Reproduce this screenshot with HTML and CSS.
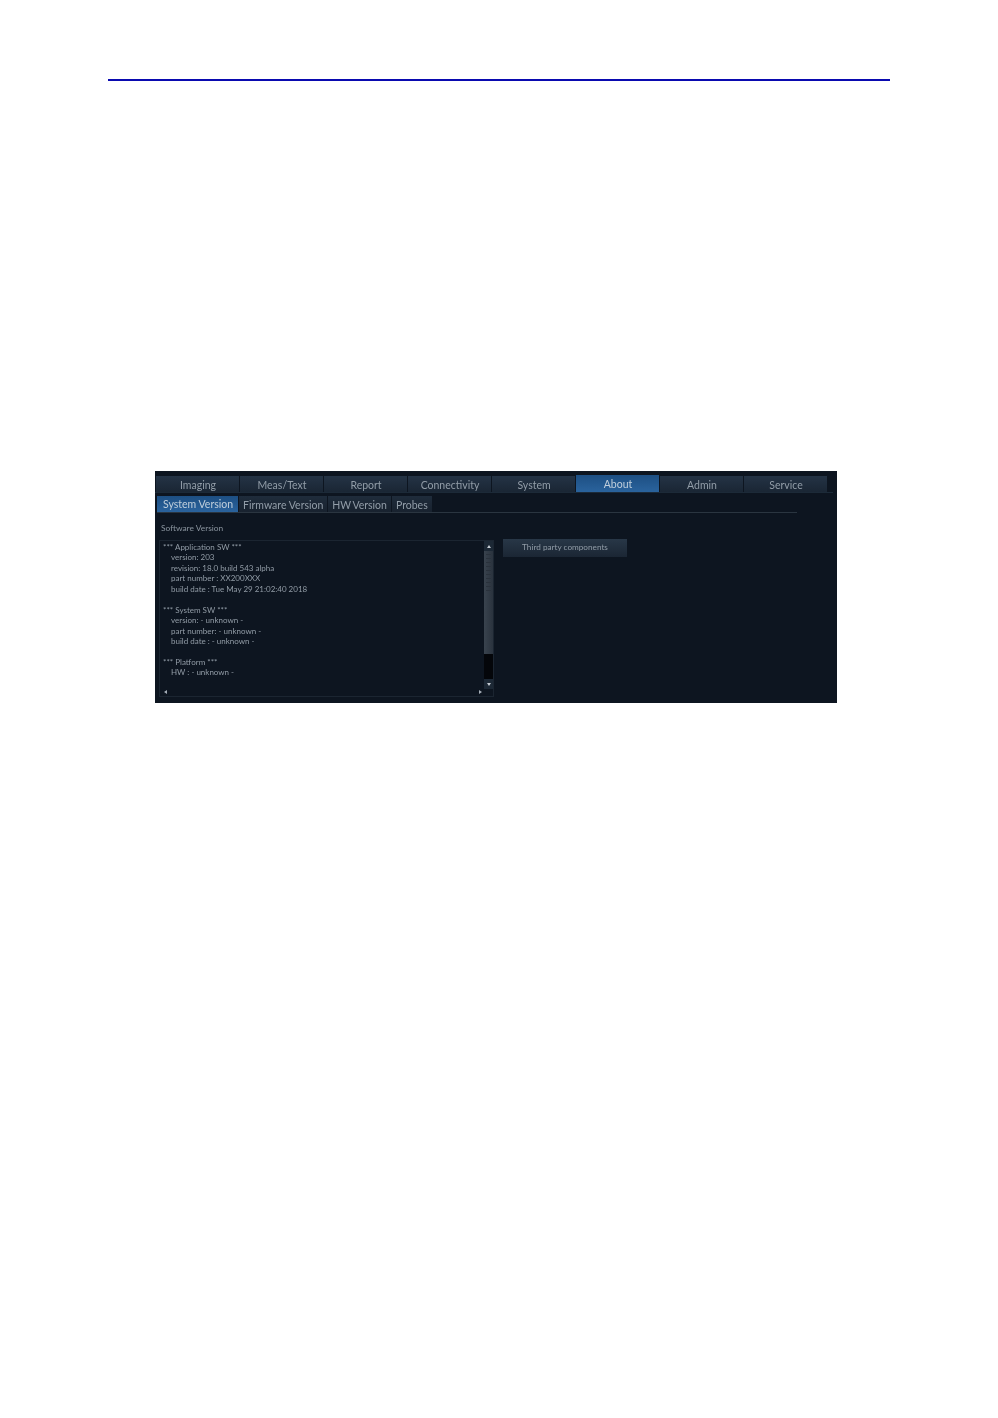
FILE: index.html
```html
<!DOCTYPE html>
<html>
<head>
  <title>About</title>
  <link rel="stylesheet" href="styles.css">
</head>
<body>
  <div class="page-rule"></div>

  <div class="panel">
    <div class="tabs">
      <div class="tab">Imaging</div>
      <div class="tab">Meas/Text</div>
      <div class="tab">Report</div>
      <div class="tab">Connectivity</div>
      <div class="tab">System</div>
      <div class="tab active">About</div>
      <div class="tab">Admin</div>
      <div class="tab">Service</div>
    </div>

    <div class="subtabs">
      <div class="subtab active">System Version</div>
      <div class="subtab">Firmware Version</div>
      <div class="subtab hw">HW Version</div>
      <div class="subtab">Probes</div>
    </div>

    <div class="section-title">Software Version</div>

    <div class="content">
      <div class="textbox">
        <div class="lines">
          <p>*** Application SW ***</p>
          <p class="indent">version: 203</p>
          <p class="indent">revision: 18.0 build 543 alpha</p>
          <p class="indent">part number : XX200XXX</p>
          <p class="indent">build date : Tue May 29 21:02:40 2018</p>
          <p>&nbsp;</p>
          <p>*** System SW ***</p>
          <p class="indent">version: - unknown -</p>
          <p class="indent">part number: - unknown -</p>
          <p class="indent">build date : - unknown -</p>
          <p>&nbsp;</p>
          <p>*** Platform ***</p>
          <p class="indent">HW : - unknown -</p>
        </div>
        <div class="vscroll">
          <div class="arrow up"></div>
          <div class="thumb"></div>
          <div class="track"></div>
          <div class="arrow down"></div>
        </div>
        <div class="hscroll">
          <div class="arrow left"></div>
          <div class="arrow right"></div>
        </div>
      </div>
      <div class="btn">Third party components</div>
    </div>
  </div>
</body>
</html>
```

FILE: styles.css
```css
body {
  background-color: #ffffff;
  margin: 0;
  padding: 0;
  font-family: "Lato", "Open Sans", sans-serif;
}

.page-rule {
  margin: 79px 108px 0 108px;
  height: 2px;
  background-color: #0a0ab0;
}

.panel {
  width: 682px;
  height: 232px;
  margin: 390px 0 0 155px;
  background-color: #0d1520;
  box-sizing: border-box;
  padding-top: 5px;
  overflow: hidden;
  filter: blur(0.35px);
}

.tabs {
  display: flex;
  padding-left: 1px;
  height: 16px;
  width: 677px;
  border-bottom: 1px solid #1c2a38;
}

.tab {
  width: 84px;
  height: 16px;
  box-sizing: border-box;
  border-right: 1px solid #0d1520;
  background: linear-gradient(#243345, #1a2634);
  color: #929da8;
  font-size: 10.5px;
  line-height: 19px;
  text-align: center;
  text-indent: 1px;
}

.tab.active {
  background: linear-gradient(#1d4f83, #2a639d);
  color: #c0cfdc;
  line-height: 18px;
  height: 17px;
  margin-top: -1px;
}

.subtabs {
  display: flex;
  gap: 1px;
  margin: 3px 40px 0 2px;
  height: 16px;
  border-bottom: 1px solid #2a3540;
}

.subtab {
  height: 16px;
  padding: 0 4px;
  background: linear-gradient(#1f2c3b, #18222f);
  color: #929da8;
  font-size: 10.5px;
  line-height: 19px;
}

.subtab.hw {
  word-spacing: -1px;
}

.subtab.active {
  padding: 0 5px 0 6px;
  background: linear-gradient(#1d4f83, #2a639d);
  color: #c0cfdc;
  line-height: 17px;
}

.section-title {
  margin: 9px 0 0 6px;
  height: 18px;
  color: #8a949e;
  font-size: 8.4px;
  line-height: 13px;
}

.content {
  display: flex;
  align-items: flex-start;
  gap: 9px;
  margin-left: 4px;
}

.textbox {
  position: relative;
  width: 335px;
  height: 157px;
  box-sizing: border-box;
  border: 1px solid #1b2531;
  padding: 1px 0 0 3px;
  overflow: hidden;
}

.lines p {
  margin: 0;
  height: 10.45px;
  color: #929ca6;
  font-size: 8px;
  line-height: 10.45px;
  white-space: nowrap;
}

.lines .indent {
  padding-left: 8px;
}

.vscroll {
  position: absolute;
  top: 0;
  right: 0;
  width: 9px;
  height: 148px;
  display: flex;
  flex-direction: column;
}

.vscroll .thumb {
  height: 103px;
  background:
    repeating-linear-gradient(#0000 0 3px, #2a323c 3px 4px) 50% 0 / 5px 42px no-repeat,
    linear-gradient(90deg, #39434e, #2a333e);
}

.vscroll .track {
  flex: 1;
  background-color: #04060a;
}

.arrow {
  flex: none;
  height: 10px;
  display: flex;
  align-items: center;
  justify-content: center;
}

.vscroll .arrow {
  background-color: #1c2835;
}

.arrow::before {
  content: "";
  width: 0;
  height: 0;
  border: 2px solid transparent;
}

.arrow.up::before {
  border-top-width: 0;
  border-bottom: 3px solid #c5ccd3;
}

.arrow.down::before {
  border-bottom-width: 0;
  border-top: 3px solid #c5ccd3;
}

.arrow.left::before {
  border-left-width: 0;
  border-right: 3px solid #a5aeb8;
}

.arrow.right::before {
  border-right-width: 0;
  border-left: 3px solid #a5aeb8;
}

.hscroll {
  position: absolute;
  left: 0;
  right: 9px;
  bottom: 0;
  height: 8px;
  padding: 0 2px 0 4px;
  display: flex;
  justify-content: space-between;
}

.hscroll .arrow {
  height: 8px;
}

.btn {
  width: 124px;
  height: 18px;
  margin-top: -1px;
  background: linear-gradient(#283747, #1b2634);
  color: #929da8;
  font-size: 8.2px;
  line-height: 17px;
  text-align: center;
}
```
